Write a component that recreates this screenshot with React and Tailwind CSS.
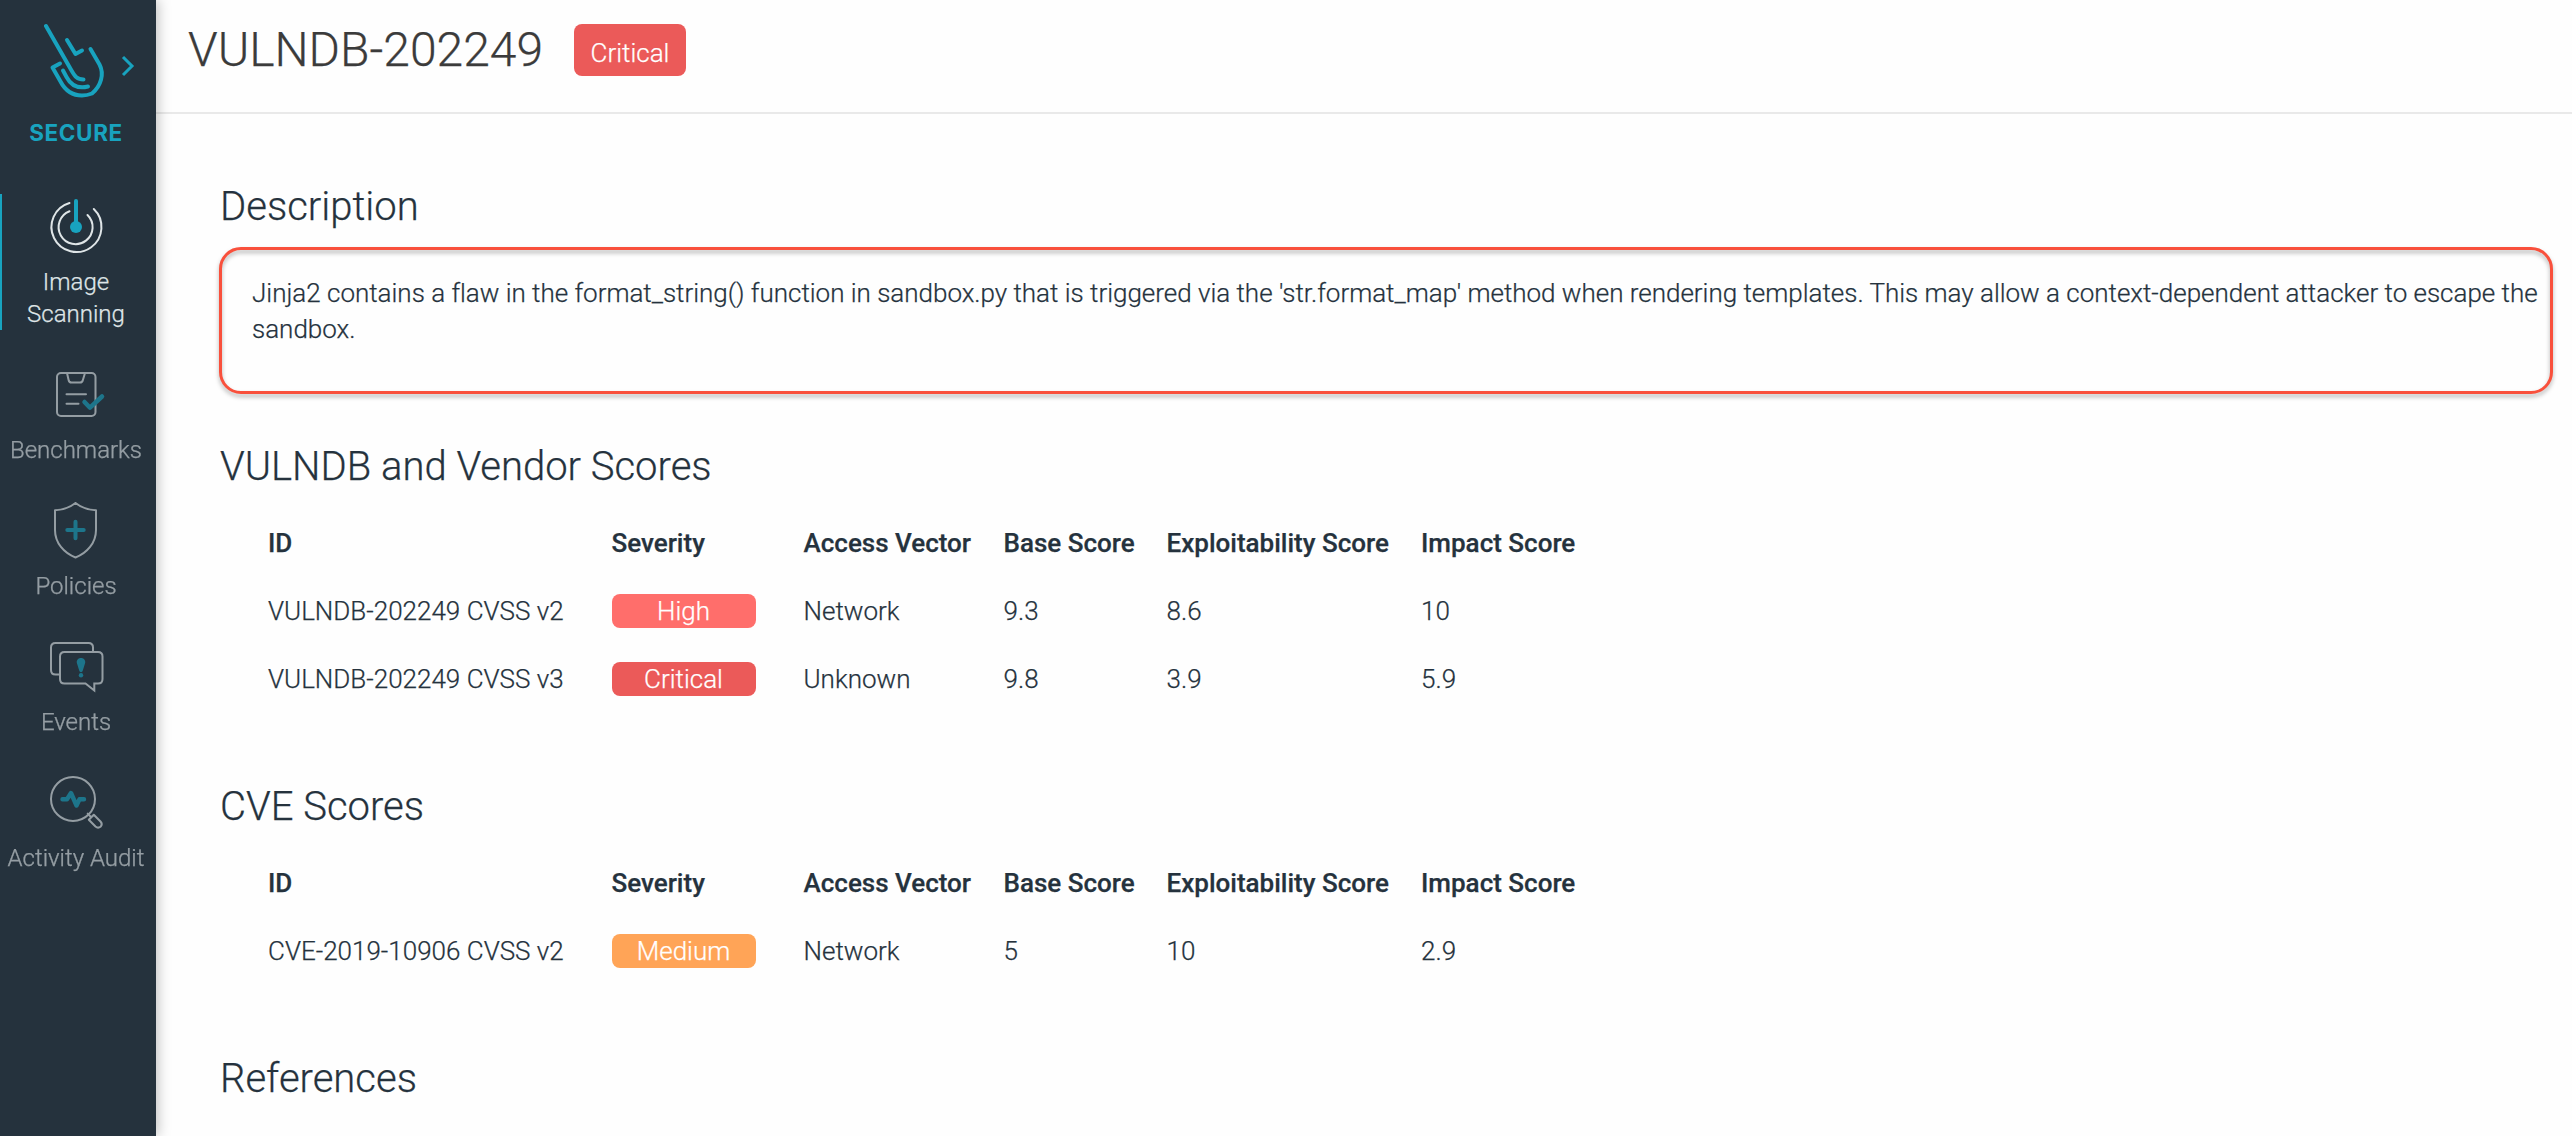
const ICON = {
  fill: 'none',
  stroke: '#dfe5e7',
  strokeWidth: 2,
  strokeLinecap: 'round',
  strokeLinejoin: 'round',
};
const TEAL = '#18a3bf';

function Logo() {
  return (
    <svg className="h-[80px] w-[64px]" viewBox="44 20 64 80" fill="none" stroke={TEAL} strokeWidth="4" strokeLinecap="round" strokeLinejoin="round">
      <path d="M46 26L71.500 70.500C75 76.500 77 79.500 83.500 79.500" />
      <path d="M67 40L75.500 54L82 50.500" />
      <path d="M60 63.500L52.500 67.500L60.500 81.500C66 92 74 95.500 82 95.500Q87 95.500 92 93.500C101 86 104.500 74 99.500 64.500L90.500 49" />
      <path d="M63 70.500L66.500 77C71 85.500 78 89 88 86.500" />
    </svg>
  );
}

function ScanIcon() {
  return (
    <svg className="h-16 w-16" viewBox="44 194 64 64" {...ICON}>
      <path d="M69.500 203A25 25 0 1 0 93.800 209" />
      <path d="M69.500 211.300A17 17 0 1 0 87.500 215" />
      <path d="M76 201V227" stroke={TEAL} strokeWidth="4" />
      <circle cx="76" cy="227" r="6" fill={TEAL} stroke="none" />
    </svg>
  );
}

function BenchmarkIcon() {
  return (
    <svg className="h-16 w-16" viewBox="44 362 64 64" {...ICON}>
      <rect x="57" y="373" width="38.500" height="43" rx="4" />
      <path d="M67 373L68.600 380Q69.100 382.600 71.500 382.600H80Q82.300 382.600 82.900 380L85 373M66.500 394.200H86M66.500 403.800H78.500" />
      <path d="M84.500 402L90 407.700L102 396.500" stroke={TEAL} strokeWidth="4.500" />
    </svg>
  );
}

function PolicyIcon() {
  return (
    <svg className="h-16 w-16" viewBox="44 498 64 64" {...ICON}>
      <path d="M75.500 503C70 507.500 62 510 55 510.300V530C55 543 64 553 75.500 557.500C87 553 96 543 96 530V510.300C89 510 81 507.500 75.500 503Z" />
      <path d="M67.300 530H83.700M75.500 521.800V538.200" stroke={TEAL} strokeWidth="4" />
    </svg>
  );
}

function EventIcon() {
  return (
    <svg className="h-16 w-16" viewBox="44 634 64 64" {...ICON} strokeLinecap="butt" strokeLinejoin="miter">
      <path d="M60 674.500H55.500Q51 674.500 51 670V647.500Q51 643 55.500 643H88.500Q93 643 93 647.500V652" />
      <path d="M85.500 683.500H64.500Q60 683.500 60 679V656.500Q60 652 64.500 652H98Q102.500 652 102.500 656.500V679Q102.500 683.500 98 683.500H94.300V690.500Z" stroke="none" />
      <path d="M94.300 690.500L85.500 683.500H64.500Q60 683.500 60 679V656.500Q60 652 64.500 652H98Q102.500 652 102.500 656.500V679Q102.500 683.500 98 683.500H94.300Z" />
      <path d="M81 658C84 658 85.500 660.200 85.200 662.800L82.800 670.500Q82.400 672.200 81 672.200Q79.600 672.200 79.200 670.500L76.800 662.800C76.500 660.200 78 658 81 658Z" fill={TEAL} stroke="none" />
      <circle cx="81" cy="675.300" r="2.200" fill={TEAL} stroke="none" />
    </svg>
  );
}

function AuditIcon() {
  return (
    <svg className="h-16 w-16" viewBox="44 770 64 64" {...ICON}>
      <circle cx="73" cy="799" r="22" />
      <path d="M88.800 819.700L93.800 814.700L100.500 821.500Q102.800 824 100.800 826.500Q98 828.800 95.500 826.500Z M87.700 813.600L91.200 817.200" />
      <path d="M62.500 799.300H67L71 793L76.500 805.500L79.500 799.300H84" stroke={TEAL} strokeWidth="4.400" />
    </svg>
  );
}

function NavItem({ icon, label, active }) {
  return (
    <a className={active ? 'relative flex flex-col items-center' : 'flex flex-col items-center opacity-60'}>
      {active && <span className="absolute inset-y-0 left-0 w-[2px] bg-[#18a3bf]" />}
      {icon}
      <span className="mt-2 text-center text-[24px] leading-8 font-light whitespace-pre text-[#dfe5e7]">{label}</span>
    </a>
  );
}

function Sidebar() {
  return (
    <aside className="relative z-10 flex w-[156px] shrink-0 flex-col bg-[#25323d] shadow-[2px_0_12px_rgba(0,0,0,0.25)]">
      <div className="flex h-[194px] flex-col items-center pt-5 pr-1">
        <div className="relative">
          <Logo />
          <svg className="absolute top-[34px] left-[76px] h-6 w-4" viewBox="120 54 16 24" fill="none" stroke={TEAL} strokeWidth="3">
            <path d="M123 57L132 66L123 75" />
          </svg>
        </div>
        <span className="mt-[21px] font-['Inter'] text-[22.5px] leading-6 font-bold tracking-[0.6px] text-[#18a3bf] [-webkit-text-stroke:0px]">SECURE</span>
      </div>
      <nav className="flex flex-col gap-8 [&>a]:pr-1">
        <NavItem active icon={<ScanIcon />} label={'Image\nScanning'} />
        <NavItem icon={<BenchmarkIcon />} label="Benchmarks" />
        <NavItem icon={<PolicyIcon />} label="Policies" />
        <NavItem icon={<EventIcon />} label="Events" />
        <NavItem icon={<AuditIcon />} label="Activity Audit" />
      </nav>
    </aside>
  );
}

const SEVERITY = { High: 'bg-[#ff6e6b]', Critical: 'bg-[#eb5a59]', Medium: 'bg-[#ffa457]' };
const COLUMNS = ['ID', 'Severity', 'Access Vector', 'Base Score', 'Exploitability Score', 'Impact Score'];
const GRID = 'grid h-[68px] grid-cols-[343.5px_192px_200px_163px_254.500px_200px] items-center';

function ScoreTable({ rows }) {
  return (
    <div className="pl-12 text-[26px] leading-[34px]">
      <div className={GRID + ' font-medium'}>
        {COLUMNS.map((c) => (
          <span key={c}>{c}</span>
        ))}
      </div>
      {rows.map(([id, severity, ...rest]) => (
        <div key={id} className={GRID}>
          <span>{id}</span>
          <span className={'w-[144px] rounded-lg text-center text-white ' + SEVERITY[severity]}>{severity}</span>
          {rest.map((v, i) => (
            <span key={i}>{v}</span>
          ))}
        </div>
      ))}
    </div>
  );
}

function Heading({ children }) {
  return <h2 className="text-[40px] leading-[48px]">{children}</h2>;
}

export default function App() {
  return (
    <div className="flex h-[1136px] w-[2572px] overflow-hidden bg-[#fefefe] font-['Roboto',sans-serif] font-light text-[#25323d] [-webkit-text-stroke:0.25px]">
      <Sidebar />
      <main className="flex flex-1 flex-col">
        <header className="flex h-[114px] items-start border-b-2 border-[#e9e9e9] pt-6 pl-8">
          <h1 className="-mt-[2px] w-[386px] text-[48px] leading-[56px] text-[#3b3b3b]">VULNDB-202249</h1>
          <span className="flex h-[52px] w-[112px] items-center justify-center rounded-lg bg-[#eb5a59] pt-[6px] text-[26px] text-white">Critical</span>
        </header>
        <div className="flex flex-col pt-[69px] pl-16">
          <section className="h-[260px]">
            <Heading>Description</Heading>
            <div className="relative mt-[17px] h-[146px] w-[2333px] pt-[27px] pr-2 pl-8">
              <div className="pointer-events-none absolute -top-px right-0 bottom-0 -left-px rounded-[22px] border-[3px] border-[#f9503c] [filter:drop-shadow(0_3px_2px_rgba(0,0,0,0.3))]" />
              <p className="text-[26px] leading-9 tracking-[-0.012px]">
                Jinja2 contains a flaw in the format_string() function in sandbox.py that is triggered via the 'str.format_map' method when rendering templates. This may allow a context-dependent attacker to escape the sandbox.
              </p>
            </div>
          </section>
          <section className="h-[340px]">
            <Heading>VULNDB and Vendor Scores</Heading>
            <div className="mt-[18px]">
              <ScoreTable
                rows={[
                  ['VULNDB-202249 CVSS v2', 'High', 'Network', '9.3', '8.6', '10'],
                  ['VULNDB-202249 CVSS v3', 'Critical', 'Unknown', '9.8', '3.9', '5.9'],
                ]}
              />
            </div>
          </section>
          <section className="h-[272px]">
            <Heading>CVE Scores</Heading>
            <div className="mt-[18px]">
              <ScoreTable rows={[['CVE-2019-10906 CVSS v2', 'Medium', 'Network', '5', '10', '2.9']]} />
            </div>
          </section>
          <Heading>References</Heading>
        </div>
      </main>
    </div>
  );
}
